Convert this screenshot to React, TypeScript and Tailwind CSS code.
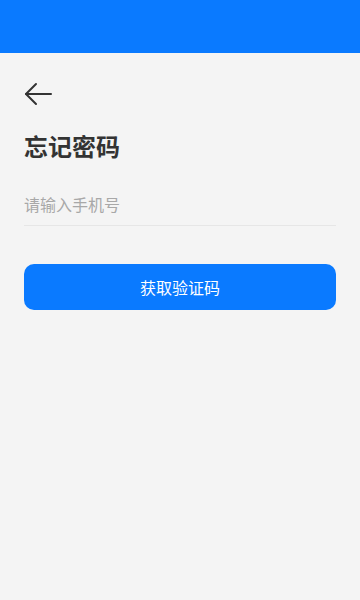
import React from "react";

export default function App() {
  return (
    <div
      className="w-[360px] h-[600px] bg-[#f4f4f4] flex flex-col"
      style={{ fontFamily: '"Noto Sans CJK SC", "Noto Sans", sans-serif' }}
    >
      <div className="h-[53px] bg-[#0a7aff] shrink-0" />
      <div className="px-6 flex flex-col">
        <div className="h-[28px] mt-[27px] flex items-center">
          <svg width="28" height="24" viewBox="0 0 28 24" fill="none" stroke="#333" strokeWidth="2" strokeLinecap="round" strokeLinejoin="round">
            <path d="M27 12H2" />
            <path d="M12 2L2 12l10 10" />
          </svg>
        </div>
        <h1 className="mt-[22px] text-[24px] leading-[32px] font-bold text-[#333]">忘记密码</h1>
        <div className="mt-[20px] h-[44px] border-b border-[#e6e6e6] flex items-center">
          <input
            className="w-full bg-transparent outline-none text-[16px] text-[#333] placeholder:text-[#a8a8a8]"
            placeholder="请输入手机号"
          />
        </div>
        <button className="mt-[38px] h-[46px] rounded-[10px] bg-[#0a7aff] text-white text-[16px] flex items-center justify-center">
          获取验证码
        </button>
      </div>
    </div>
  );
}
